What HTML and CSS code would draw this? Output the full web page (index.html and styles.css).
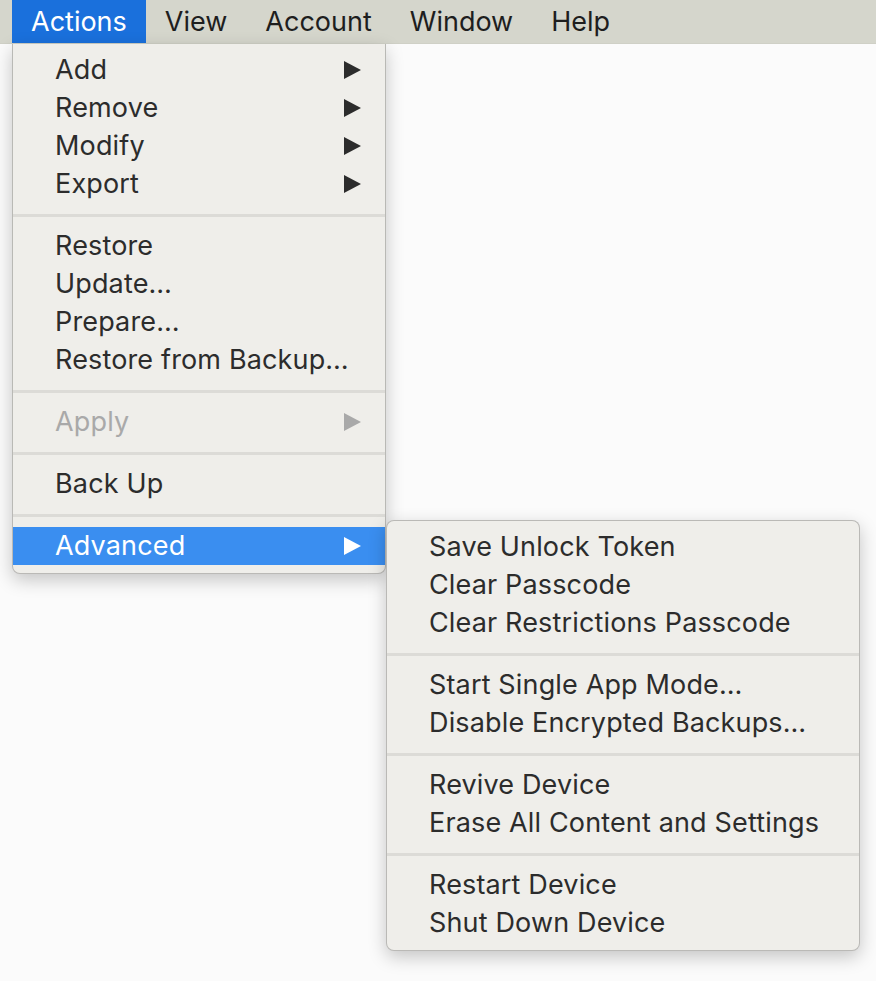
FILE: index.html
```html
<!DOCTYPE html>
<html>
<head>
<meta charset="utf-8">
<link rel="stylesheet" href="styles.css">
</head>
<body>
<div class="menubar">
  <div class="mb-item active">Actions</div>
  <div class="mb-item">View</div>
  <div class="mb-item">Account</div>
  <div class="mb-item">Window</div>
  <div class="mb-item">Help</div>
</div>

<div class="menu main-menu">
  <div class="item sub"><span>Add</span><span class="arrow"></span></div>
  <div class="item sub"><span>Remove</span><span class="arrow"></span></div>
  <div class="item sub"><span>Modify</span><span class="arrow"></span></div>
  <div class="item sub"><span>Export</span><span class="arrow"></span></div>
  <div class="sep"></div>
  <div class="item"><span>Restore</span></div>
  <div class="item"><span>Update…</span></div>
  <div class="item"><span>Prepare…</span></div>
  <div class="item"><span>Restore from Backup…</span></div>
  <div class="sep"></div>
  <div class="item sub disabled"><span>Apply</span><span class="arrow"></span></div>
  <div class="sep"></div>
  <div class="item"><span>Back Up</span></div>
  <div class="sep"></div>
  <div class="item sub selected"><span>Advanced</span><span class="arrow"></span></div>
</div>

<div class="menu sub-menu">
  <div class="item"><span>Save Unlock Token</span></div>
  <div class="item"><span>Clear Passcode</span></div>
  <div class="item"><span>Clear Restrictions Passcode</span></div>
  <div class="sep"></div>
  <div class="item"><span>Start Single App Mode…</span></div>
  <div class="item"><span>Disable Encrypted Backups…</span></div>
  <div class="sep"></div>
  <div class="item"><span>Revive Device</span></div>
  <div class="item"><span>Erase All Content and Settings</span></div>
  <div class="sep"></div>
  <div class="item"><span>Restart Device</span></div>
  <div class="item"><span>Shut Down Device</span></div>
</div>
</body>
</html>
```

FILE: styles.css
```css
* { box-sizing: border-box; }
html, body {
  margin: 0;
  padding: 0;
  background: #fbfbfb;
  font-family: Inter, "Liberation Sans", sans-serif;
  font-size: 27px;
  color: #2c2c2c;
  width: 876px;
  height: 981px;
  overflow: hidden;
  position: relative;
}
.menubar {
  height: 44px;
  background: #d5d6cc;
  display: flex;
  padding-left: 12px;
  border-bottom: 1px solid #cfd0c6;
}
.mb-item {
  padding: 0 19px 0 19px;
  line-height: 44px;
  color: #1e1e1e;
}
.mb-item.active {
  background: #1a70dc;
  color: #fff;
}
.menu {
  position: absolute;
  background: #efeeea;
  border: 1px solid rgba(0,0,0,0.22);
  box-shadow: 0 6px 18px rgba(0,0,0,0.22);
  padding: 7px 0 8px;
}
.main-menu {
  left: 12px;
  top: 44px;
  width: 374px;
  border-top: none;
  border-radius: 0 0 8px 8px;
}
.sub-menu {
  left: 386px;
  top: 520px;
  width: 474px;
  border-radius: 8px;
}
.item {
  height: 38px;
  display: flex;
  align-items: center;
  justify-content: space-between;
  padding: 0 24px 1px 42px;
  letter-spacing: 0.15px;
}
.item.disabled { color: #a9a9a9; }
.item.selected { background: #3a8ef0; color: #fff; }
.sep {
  height: 24px;
  display: flex;
  align-items: center;
}
.sep::before {
  content: "";
  display: block;
  width: 100%;
  height: 3px;
  background: #dcdbd7;
}
.arrow {
  width: 0;
  height: 0;
  margin-top: 1px;
  border-top: 9px solid transparent;
  border-bottom: 9px solid transparent;
  border-left: 17px solid #2c2c2c;
}
.disabled .arrow { border-left-color: #a9a9a9; }
.selected .arrow { border-left-color: #fff; }
```
